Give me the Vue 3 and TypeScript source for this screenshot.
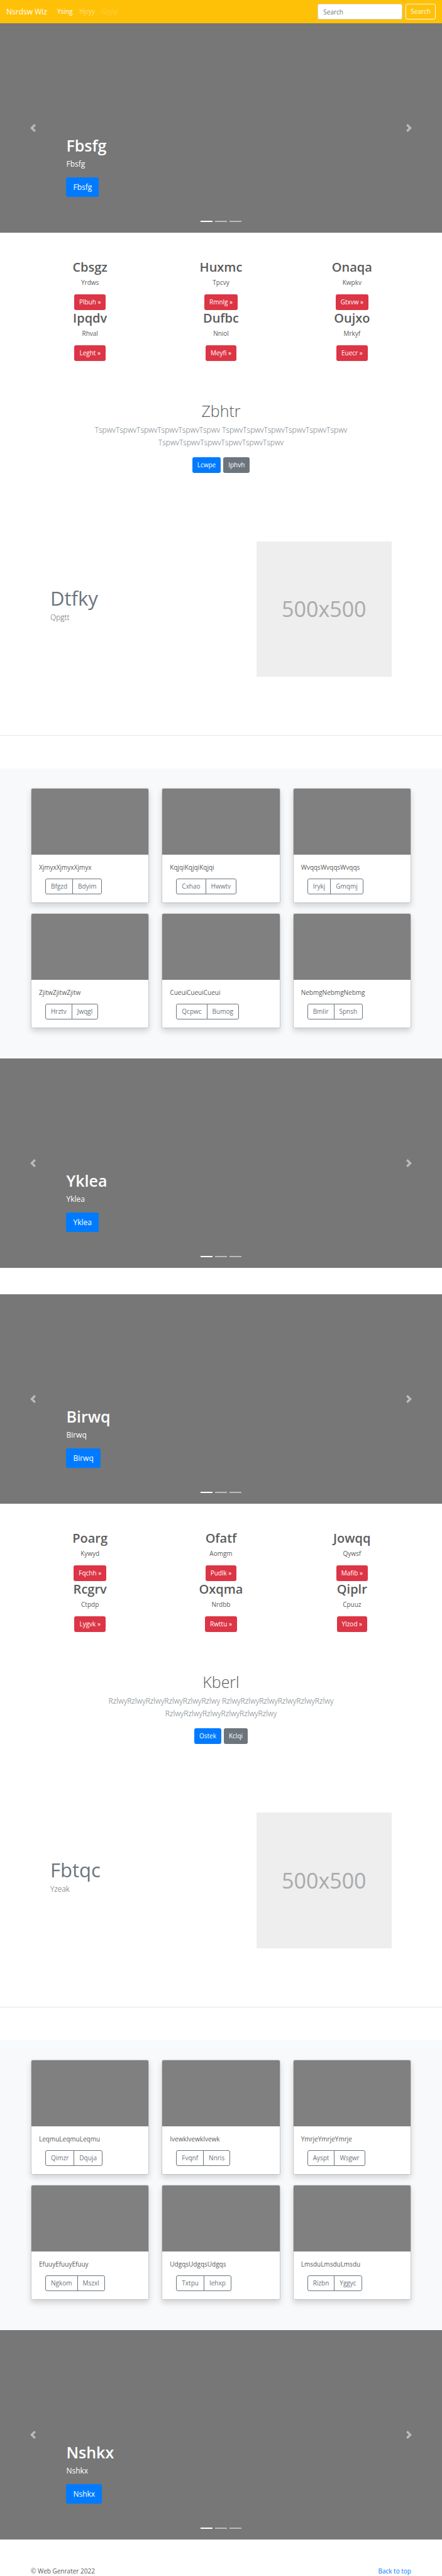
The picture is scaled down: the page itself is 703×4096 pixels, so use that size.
<script setup lang="ts">
interface Teaser { title: string; text: string; action: string }
interface Card { text: string; actions: [string, string] }
interface Block {
  hero: string
  teasers: Teaser[]
  intro: { title: string; text: string; primary: string; secondary: string }
  feature: { title: string; text: string }
  cards: Card[]
  closing: string
}

const navLinks = [
  { label: 'Ysing', state: 'active' },
  { label: 'Hjcyy', state: 'normal' },
  { label: 'Gzyip', state: 'disabled' },
]

const blocks: Block[] = [
  {
    hero: 'Fbsfg',
    teasers: [
      { title: 'Cbsgz', text: 'Yrdws', action: 'Plbuh' },
      { title: 'Huxmc', text: 'Tpcvy', action: 'Rmnlg' },
      { title: 'Onaqa', text: 'Kwpkv', action: 'Gtxvw' },
      { title: 'Ipqdv', text: 'Rhval', action: 'Leght' },
      { title: 'Dufbc', text: 'Nniol', action: 'Meyfi' },
      { title: 'Oujxo', text: 'Mrkyf', action: 'Euecr' },
    ],
    intro: {
      title: 'Zbhtr',
      text: 'TspwvTspwvTspwvTspwvTspwvTspwv TspwvTspwvTspwvTspwvTspwvTspwv TspwvTspwvTspwvTspwvTspwvTspwv',
      primary: 'Lcwpe',
      secondary: 'Iphvh',
    },
    feature: { title: 'Dtfky', text: 'Qpgtt' },
    cards: [
      { text: 'XjmyxXjmyxXjmyx', actions: ['Bfgzd', 'Bdyim'] },
      { text: 'KqjqiKqjqiKqjqi', actions: ['Cxhao', 'Hwwtv'] },
      { text: 'WvqqsWvqqsWvqqs', actions: ['Irykj', 'Gmqmj'] },
      { text: 'ZjitwZjitwZjitw', actions: ['Hrztv', 'Jwqgl'] },
      { text: 'CueuiCueuiCueui', actions: ['Qcpwc', 'Bumog'] },
      { text: 'NebmgNebmgNebmg', actions: ['Bmlir', 'Spnsh'] },
    ],
    closing: 'Yklea',
  },
  {
    hero: 'Birwq',
    teasers: [
      { title: 'Poarg', text: 'Kywyd', action: 'Fqchh' },
      { title: 'Ofatf', text: 'Aomgm', action: 'Pudlk' },
      { title: 'Jowqq', text: 'Qywsf', action: 'Mafib' },
      { title: 'Rcgrv', text: 'Ctpdp', action: 'Lygvk' },
      { title: 'Oxqma', text: 'Nrdbb', action: 'Rwttu' },
      { title: 'Qiplr', text: 'Cpuuz', action: 'Ylzod' },
    ],
    intro: {
      title: 'Kberl',
      text: 'RzlwyRzlwyRzlwyRzlwyRzlwyRzlwy RzlwyRzlwyRzlwyRzlwyRzlwyRzlwy RzlwyRzlwyRzlwyRzlwyRzlwyRzlwy',
      primary: 'Ostek',
      secondary: 'Kclqi',
    },
    feature: { title: 'Fbtqc', text: 'Yzeak' },
    cards: [
      { text: 'LeqmuLeqmuLeqmu', actions: ['Qimzr', 'Dquja'] },
      { text: 'IvewkIvewkIvewk', actions: ['Fvqnf', 'Nnris'] },
      { text: 'YmrjeYmrjeYmrje', actions: ['Ayspt', 'Wsgwr'] },
      { text: 'EfuuyEfuuyEfuuy', actions: ['Ngkom', 'Mszxl'] },
      { text: 'UdgqsUdgqsUdgqs', actions: ['Txtpu', 'Iehxp'] },
      { text: 'LmsduLmsduLmsdu', actions: ['Rizbn', 'Yggyc'] },
    ],
    closing: 'Nshkx',
  },
]
</script>

<template>
  <div class="page" id="top">
    <header class="navbar">
      <a class="brand" href="#">Nsrdsw Wiz</a>
      <nav class="links">
        <a v-for="link in navLinks" :key="link.label" href="#" :class="link.state">{{ link.label }}</a>
      </nav>
      <form class="search" @submit.prevent>
        <input type="search" placeholder="Search" aria-label="Search" />
        <button type="submit">Search</button>
      </form>
    </header>

    <main>
      <div v-for="block in blocks" :key="block.hero" class="block">
        <template v-for="part in ['hero', 'closing'] as const" :key="part">
          <template v-if="part === 'closing'">
            <section class="container teasers">
              <article v-for="t in block.teasers" :key="t.title" class="teaser">
                <h2>{{ t.title }}</h2>
                <p>{{ t.text }}</p>
                <a class="btn danger" href="#">{{ t.action }} »</a>
              </article>
            </section>

            <section class="intro">
              <h1>{{ block.intro.title }}</h1>
              <p>{{ block.intro.text }}</p>
              <div class="intro-actions">
                <a class="btn primary" href="#">{{ block.intro.primary }}</a>
                <a class="btn secondary" href="#">{{ block.intro.secondary }}</a>
              </div>
            </section>

            <section class="container feature">
              <div>
                <h2>{{ block.feature.title }}</h2>
                <p>{{ block.feature.text }}</p>
              </div>
              <div class="placeholder">500x500</div>
            </section>

            <hr />

            <section class="album">
              <div class="container cards">
                <article v-for="c in block.cards" :key="c.text" class="card">
                  <div class="thumb"></div>
                  <div class="card-body">
                    <p>{{ c.text }}</p>
                    <div class="group">
                      <button v-for="a in c.actions" :key="a" type="button">{{ a }}</button>
                    </div>
                  </div>
                </article>
              </div>
            </section>
          </template>

          <section class="carousel">
            <div class="caption">
              <h1>{{ block[part] }}</h1>
              <p>{{ block[part] }}</p>
              <a class="btn primary large" href="#">{{ block[part] }}</a>
            </div>
            <button type="button" class="control prev" aria-label="Previous">
              <svg viewBox="0 0 8 8"><path d="M5.25 0l-4 4 4 4 1.5-1.5-2.5-2.5 2.5-2.5-1.5-1.5z" /></svg>
            </button>
            <button type="button" class="control next" aria-label="Next">
              <svg viewBox="0 0 8 8"><path d="M2.75 0l-1.5 1.5 2.5 2.5-2.5 2.5 1.5 1.5 4-4-4-4z" /></svg>
            </button>
            <div class="indicators"><span class="on"></span><span></span><span></span></div>
          </section>
        </template>
      </div>
    </main>

    <footer class="container footer">
      <span>© Web Genrater 2022</span>
      <a href="#top">Back to top</a>
    </footer>
  </div>
</template>

<style>
body {
  margin: 0;
  background: #fff;
}
</style>

<style scoped>
.page {
  font-family: "Open Sans", "Noto Sans", sans-serif;
  font-size: 10px;
  line-height: 15px;
  color: #5a5a5a;
}
.page * {
  box-sizing: border-box;
}
h1,
h2,
p {
  margin: 0;
}
a {
  text-decoration: none;
}
button,
input {
  font: inherit;
}
.container {
  max-width: 625px;
  margin: 0 auto;
  padding: 0 10px;
}

.navbar {
  display: flex;
  align-items: center;
  padding: 6px 10px;
  background: #ffc107;
}
.brand {
  margin-right: 16px;
  font-size: 12px;
  color: #fff;
}
.links {
  display: flex;
  flex: 1;
  gap: 11px;
}
.links a {
  color: rgba(255, 255, 255, 0.5);
}
.links .active {
  color: #fff;
}
.links .disabled {
  color: rgba(255, 255, 255, 0.25);
}
.search {
  display: flex;
  gap: 5px;
}
.search input {
  width: 135px;
  height: 25px;
  padding: 0 8px;
  border: 1px solid #ced4da;
  border-radius: 3px;
  background: #fff;
  color: #495057;
}
.search input::placeholder {
  color: #6c757d;
  opacity: 1;
}
.search button {
  height: 25px;
  padding: 0 7px;
  border: 1px solid #f8f9fa;
  border-radius: 3px;
  background: transparent;
  color: #f8f9fa;
}

.btn {
  display: inline-block;
  padding: 5px 8px;
  border-radius: 3px;
  color: #fff;
}
.primary {
  background: #007bff;
}
.secondary {
  background: #6c757d;
}
.danger {
  background: #dc3545;
}
.large {
  padding: 8px 11px;
  font-size: 12px;
}

.block + .block {
  margin-top: 42px;
}

.carousel {
  position: relative;
  display: flex;
  align-items: flex-end;
  min-height: 333px;
  padding: 0 15% 57px;
  background: #777;
  color: #fff;
}
.caption h1 {
  margin-bottom: 4px;
  font-size: 25px;
  font-weight: 600;
  line-height: 31px;
}
.caption p {
  margin-bottom: 11px;
  font-size: 12px;
  line-height: 20px;
}
.control {
  position: absolute;
  top: 0;
  bottom: 0;
  display: flex;
  align-items: center;
  justify-content: center;
  width: 15%;
  padding: 0;
  border: 0;
  background: none;
  opacity: 0.5;
}
.control svg {
  width: 13px;
  height: 13px;
  fill: #fff;
}
.prev {
  left: 0;
}
.next {
  right: 0;
}
.indicators {
  position: absolute;
  right: 0;
  bottom: 17px;
  left: 0;
  display: flex;
  justify-content: center;
  gap: 4px;
}
.indicators span {
  width: 19px;
  height: 2px;
  background: rgba(255, 255, 255, 0.5);
}
.indicators .on {
  background: #fff;
}

.teasers {
  display: grid;
  grid-template-columns: repeat(3, 1fr);
  padding: 42px 0 64px;
  text-align: center;
}
.teaser h2 {
  margin-bottom: 5px;
  font-size: 20px;
  font-weight: 600;
  line-height: 25px;
}
.teaser p {
  margin-bottom: 11px;
}
.teaser .btn {
  vertical-align: top;
}

.intro {
  max-width: 415px;
  margin: 0 auto;
  text-align: center;
}
.intro h1 {
  margin-bottom: 5px;
  font-size: 25px;
  font-weight: 300;
  line-height: 31px;
}
.intro p {
  margin-bottom: 13px;
  font-size: 12px;
  font-weight: 300;
  line-height: 20px;
  color: #6c757d;
}
.intro-actions {
  display: flex;
  justify-content: center;
  gap: 4px;
}

.feature {
  display: grid;
  grid-template-columns: 10fr 7fr;
  column-gap: 20px;
  align-items: center;
  padding: 109px 41px 93px;
}
.feature h2 {
  margin-bottom: 4px;
  font-size: 31px;
  font-weight: 400;
  line-height: 33px;
  color: #6c757d;
}
.feature p {
  margin-bottom: 10px;
  font-size: 12px;
  font-weight: 300;
  line-height: 20px;
}
.placeholder {
  display: flex;
  align-items: center;
  justify-content: center;
  aspect-ratio: 1;
  background: #eee;
  font-size: 34px;
  color: #aaa;
}
hr {
  height: 1px;
  margin: 0 0 52px;
  border: 0;
  background: #e5e5e5;
}

.album {
  padding: 31px 0 48px;
  background: #f8f9fa;
}
.cards {
  display: grid;
  grid-template-columns: repeat(3, 1fr);
  gap: 16px 20px;
}
.card {
  overflow: hidden;
  border: 1px solid rgba(0, 0, 0, 0.125);
  border-radius: 3px;
  background: #fff;
  background-clip: padding-box;
  box-shadow: 0 5px 10px rgba(0, 0, 0, 0.15);
}
.thumb {
  height: 105px;
  background: #808080;
}
.card-body {
  padding: 13px 12px;
}
.card-body p {
  margin-bottom: 10px;
}
.group {
  display: flex;
  padding-left: 10px;
}
.group button {
  height: 25px;
  padding: 0 8px;
  border: 1px solid #6c757d;
  background: transparent;
  color: #6c757d;
}
.group button:first-child {
  border-radius: 3px 0 0 3px;
}
.group button:last-child {
  margin-left: -1px;
  border-radius: 0 3px 3px 0;
}

.footer {
  display: flex;
  justify-content: space-between;
  padding-top: 43px;
}
.footer a {
  color: #007bff;
}
</style>
